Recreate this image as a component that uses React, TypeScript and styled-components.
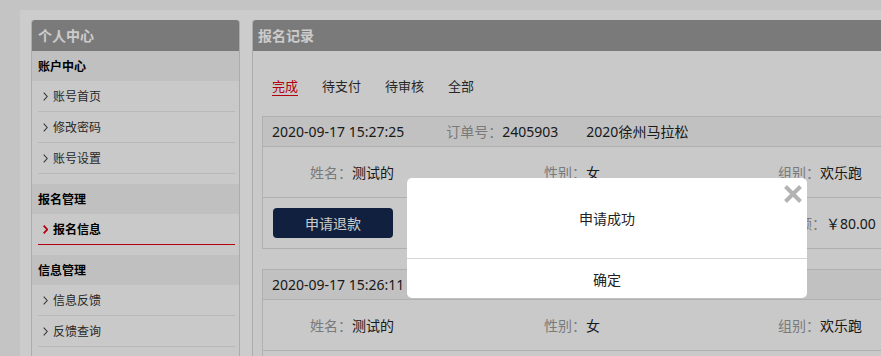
import React from "react";
import styled, { createGlobalStyle } from "styled-components";

const Global = createGlobalStyle`
  html, body { margin: 0; padding: 0; background: #f5f5f5; overflow: hidden; }
  body { font-family: "Noto Sans", "Noto Sans CJK SC", sans-serif; color: #333; }
  * { box-sizing: border-box; }
`;

const Page = styled.div`
  margin: 10px 0 0 20px;
  width: 1180px;
  min-height: 420px;
  background: #ffffff;
  padding: 10px 12px 0 11px;
  display: flex;
  gap: 12px;
  align-items: flex-start;
`;

const Panel = styled.section<{ $w?: number }>`
  ${(p) => (p.$w ? `width: ${p.$w}px; flex-shrink: 0;` : "flex: 1;")}
  background: #fcfcfc;
  border: 1px solid #d8d8d8;
  border-top: none;
  border-radius: 3px 3px 0 0;
  min-height: 400px;
`;

const PanelHeader = styled.h2<{ $pad: number }>`
  margin: 0;
  height: 31px;
  line-height: 31px;
  padding-left: ${(p) => p.$pad}px;
  background: #999999;
  color: #ffffff;
  font-size: 14px;
  font-weight: bold;
  border-radius: 3px 3px 0 0;
`;

const Group = styled.div`
  margin-bottom: 10px;
`;

const GroupTitle = styled.div`
  height: 30px;
  line-height: 31px;
  padding-left: 6px;
  background: #f0f0f0;
  color: #000;
  font-size: 12px;
  font-weight: bold;
`;

const ItemList = styled.ul`
  list-style: none;
  margin: 0;
  padding: 0 4px 0 6px;
`;

const Item = styled.li<{ $active?: boolean }>`
  height: 31px;
  display: flex;
  align-items: center;
  gap: 5px;
  padding-left: 5px;
  font-size: 12px;
  color: ${(p) => (p.$active ? "#000" : "#333")};
  font-weight: ${(p) => (p.$active ? "bold" : "normal")};
  border-bottom: 1px solid ${(p) => (p.$active ? "#e00012" : "#e6e6e6")};
`;

const Chevron = ({ active }: { active?: boolean }) => (
  <svg width="5" height="9" viewBox="0 0 5 9">
    <polyline
      points="0.7,0.7 4.2,4.5 0.7,8.3"
      fill="none"
      stroke={active ? "#e00012" : "#444"}
      strokeWidth={active ? 1.8 : 1.1}
    />
  </svg>
);

const TabBar = styled.nav`
  display: flex;
  gap: 24px;
  padding: 27px 19px 20px;
`;

const Tab = styled.span<{ $active?: boolean }>`
  display: inline-block;
  height: 18px;
  line-height: 17px;
  font-size: 13px;
  color: ${(p) => (p.$active ? "#e00012" : "#333")};
  border-bottom: 1px solid ${(p) => (p.$active ? "#e00012" : "transparent")};
`;

const CardList = styled.div`
  padding: 0 9px;
`;

const Card = styled.div`
  border: 1px solid #dcdcdc;
  margin-bottom: 20px;
`;

const CardHeader = styled.div`
  height: 30px;
  line-height: 29px;
  padding-left: 9px;
  background: #f2f2f2;
  border-bottom: 1px solid #dcdcdc;
  font-size: 14px;
  color: #222;
  display: flex;
`;

const Muted = styled.span<{ $gap?: number }>`
  color: #999;
  margin-left: ${(p) => p.$gap ?? 0}px;
`;

const Spaced = styled.span<{ $gap: number }>`
  margin-left: ${(p) => p.$gap}px;
`;

const InfoRow = styled.div`
  height: 51px;
  border-bottom: 1px solid #dcdcdc;
  display: grid;
  grid-template-columns: repeat(3, 234px);
  align-items: center;
  padding-left: 47px;
  font-size: 14px;
  color: #222;
`;

const ActionRow = styled.div`
  height: 50px;
  display: grid;
  grid-template-columns: 511px 1fr;
  align-items: center;
  padding: 0 10px;
  font-size: 14px;
  color: #222;
  white-space: nowrap;
`;

const RefundButton = styled.button`
  width: 120px;
  height: 30px;
  border: none;
  border-radius: 4px;
  background: #14294e;
  color: #fff;
  font-family: inherit;
  font-size: 14px;
  padding: 0;
`;

const Overlay = styled.div`
  position: fixed;
  inset: 0;
  background: rgba(0, 0, 0, 0.2);
  z-index: 1000;
`;

const Modal = styled.div`
  position: fixed;
  left: 407px;
  top: 178px;
  width: 400px;
  height: 120px;
  background: #fff;
  border-radius: 5px;
  z-index: 1001;
  display: flex;
  flex-direction: column;
  font-size: 14px;
  color: #222;
`;

const ModalBody = styled.div`
  height: 81px;
  border-bottom: 1px solid #d6d6d6;
  display: flex;
  align-items: center;
  justify-content: center;
`;

const ModalFooter = styled.div`
  flex: 1;
  display: flex;
  align-items: center;
  justify-content: center;
`;

const CloseBtn = styled.span`
  position: absolute;
  right: 4px;
  top: 6px;
  width: 20px;
  height: 20px;
  display: block;
`;

type Rec = { time: string; order: string };
const records: Rec[] = [
  { time: "2020-09-17 15:27:25", order: "2405903" },
  { time: "2020-09-17 15:26:11", order: "2405902" },
];

const groups = [
  { title: "账户中心", items: ["账号首页", "修改密码", "账号设置"] },
  { title: "报名管理", items: ["报名信息"], active: "报名信息" },
  { title: "信息管理", items: ["信息反馈", "反馈查询"] },
];

export default function App() {
  return (
    <>
      <Global />
      <Page>
        <Panel $w={209}>
          <PanelHeader $pad={6}>个人中心</PanelHeader>
          {groups.map((g) => (
            <Group key={g.title}>
              <GroupTitle>{g.title}</GroupTitle>
              <ItemList>
                {g.items.map((it) => (
                  <Item key={it} $active={g.active === it}>
                    <Chevron active={g.active === it} />
                    {it}
                  </Item>
                ))}
              </ItemList>
            </Group>
          ))}
        </Panel>
        <Panel>
          <PanelHeader $pad={5}>报名记录</PanelHeader>
          <TabBar>
            <Tab $active>完成</Tab>
            <Tab>待支付</Tab>
            <Tab>待审核</Tab>
            <Tab>全部</Tab>
          </TabBar>
          <CardList>
            {records.map((r) => (
              <Card key={r.time}>
                <CardHeader>
                  <span>{r.time}</span>
                  <Muted $gap={42}>订单号：</Muted>
                  <span>{r.order}</span>
                  <Spaced $gap={28}>2020徐州马拉松</Spaced>
                </CardHeader>
                <InfoRow>
                  <span>
                    <Muted>姓名：</Muted>测试的
                  </span>
                  <span>
                    <Muted>性别：</Muted>女
                  </span>
                  <span>
                    <Muted>组别：</Muted>欢乐跑
                  </span>
                </InfoRow>
                <ActionRow>
                  <span>
                    <RefundButton>申请退款</RefundButton>
                  </span>
                  <span>
                    <Muted>金额：</Muted>￥80.00
                  </span>
                </ActionRow>
              </Card>
            ))}
          </CardList>
        </Panel>
      </Page>
      <Overlay />
      <Modal>
        <CloseBtn>
          <svg width="20" height="20" viewBox="0 0 20 20">
            <path d="M2.5 2.5 L17.5 17.5 M17.5 2.5 L2.5 17.5" stroke="#b3b3b3" strokeWidth="4" />
          </svg>
        </CloseBtn>
        <ModalBody>申请成功</ModalBody>
        <ModalFooter>确定</ModalFooter>
      </Modal>
    </>
  );
}
